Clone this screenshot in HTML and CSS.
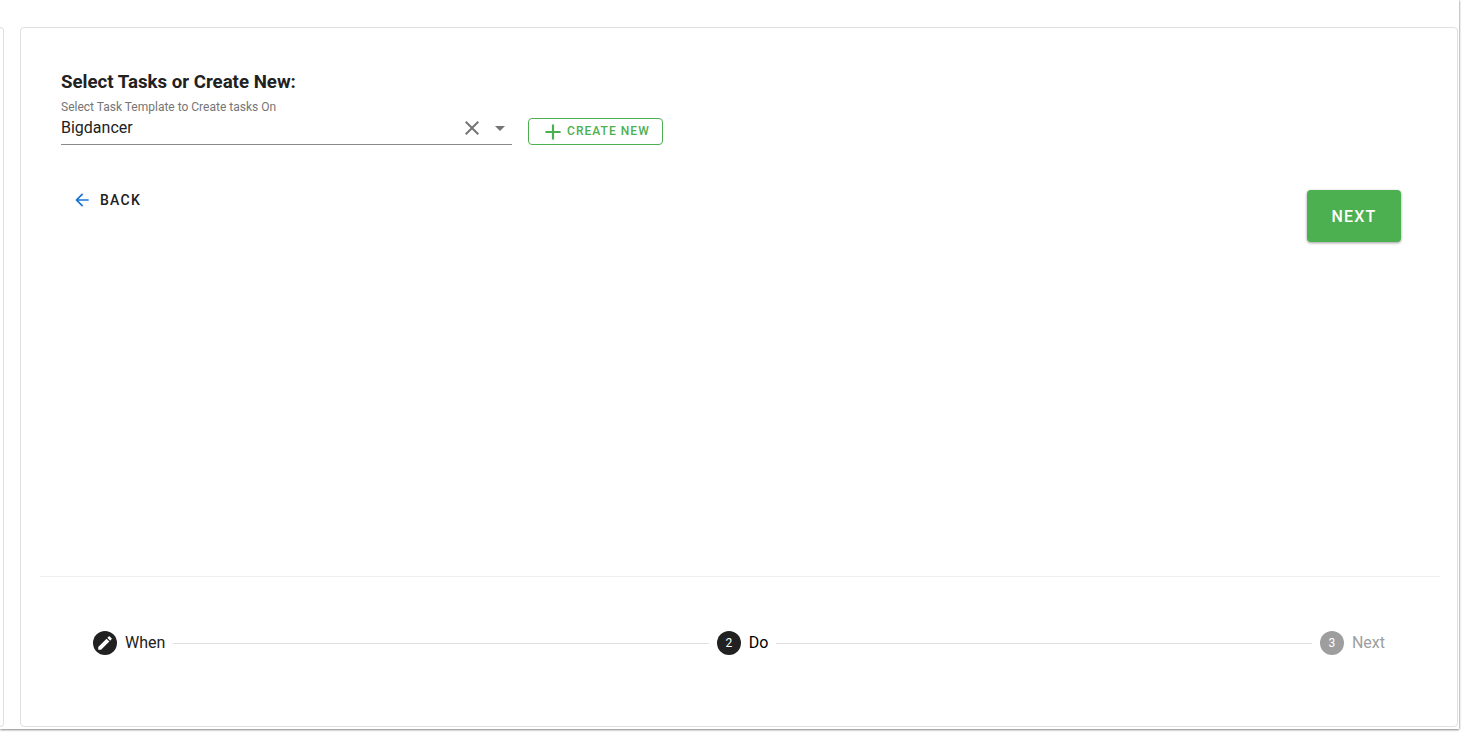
FILE: index.html
```html
<!DOCTYPE html>
<html lang="en">

<head>
    <meta charset="UTF-8">
    <title>Create Automation</title>
    <link rel="stylesheet" href="styles.css">
</head>

<body>
    <div class="page">
        <div class="side-panel"></div>

        <div class="card">
            <div class="card-body">
                <h2 class="title">Select Tasks or Create New:</h2>

                <div class="field-row">
                    <div class="field">
                        <label class="field-label">Select Task Template to Create tasks On</label>
                        <div class="field-input">
                            <span class="field-value">Bigdancer</span>
                            <svg class="icon-clear" viewBox="0 0 24 24">
                                <path d="M19 6.41 17.59 5 12 10.59 6.41 5 5 6.41 10.59 12 5 17.59 6.41 19 12 13.41 17.59 19 19 17.59 13.41 12z"></path>
                            </svg>
                            <svg class="icon-caret" viewBox="0 0 24 24">
                                <path d="M7 10l5 5 5-5z"></path>
                            </svg>
                        </div>
                    </div>

                    <button class="btn-create">
                        <svg class="icon-plus" viewBox="0 0 24 24">
                            <path d="M19 13h-6v6h-2v-6H5v-2h6V5h2v6h6v2z"></path>
                        </svg>
                        <span class="btn-create-text">Create New</span>
                    </button>
                </div>

                <div class="actions">
                    <button class="btn-back">
                        <svg class="icon-back" viewBox="0 0 24 24">
                            <path d="M20 11H7.83l5.59-5.59L12 4l-8 8 8 8 1.41-1.41L7.83 13H20v-2z"></path>
                        </svg>
                        Back
                    </button>
                    <button class="btn-next">Next</button>
                </div>
            </div>

            <hr class="divider">

            <div class="stepper">
                <div class="step">
                    <span class="step-circle">
                        <svg class="icon-edit" viewBox="0 0 24 24">
                            <path d="M3 17.25V21h3.75L17.81 9.94l-3.75-3.75L3 17.25zM20.71 7.04a1 1 0 0 0 0-1.41l-2.34-2.34a1 1 0 0 0-1.41 0l-1.83 1.83 3.75 3.75 1.83-1.83z"></path>
                        </svg>
                    </span>
                    <span class="step-label">When</span>
                </div>
                <div class="step-line"></div>
                <div class="step">
                    <span class="step-circle">2</span>
                    <span class="step-label step-active">Do</span>
                </div>
                <div class="step-line"></div>
                <div class="step step-disabled">
                    <span class="step-circle">3</span>
                    <span class="step-label">Next</span>
                </div>
            </div>
        </div>
    </div>
</body>

</html>
```

FILE: styles.css
```css
/* General Page Styles */
html,
body {
    margin: 0;
    padding: 0;
    background-color: #fff;
    overflow: hidden;
}

body {
    font-family: 'Roboto', 'Liberation Sans', sans-serif;
    color: #212121;
    height: 749px;
}

button {
    font-family: inherit;
    cursor: pointer;
}

/* Layout */
.page {
    display: flex;
    gap: 16px;
    width: 1459px;
    height: 729px;
    padding: 27px 1px 2px 0;
    box-sizing: border-box;
    box-shadow: 0 1px 2px rgba(0, 0, 0, 0.45), 1px 0 2px rgba(0, 0, 0, 0.12);
}

.side-panel {
    width: 4px;
    flex-shrink: 0;
    border: 1px solid #e0e0e0;
    border-left: none;
    border-radius: 0 4px 4px 0;
    box-sizing: border-box;
}

.card {
    flex: 1;
    display: flex;
    flex-direction: column;
    border: 1px solid #e0e0e0;
    border-radius: 4px;
    padding: 0 17px 0 19px;
    box-sizing: border-box;
}

.card-body {
    flex: 1;
    padding: 43px 39px 0 21px;
}

.title {
    margin: 0;
    font-size: 18.66px;
    line-height: 22px;
    font-weight: 700;
    color: #212121;
}

/* Select field */
.field-row {
    display: flex;
    align-items: flex-end;
    gap: 16px;
    margin-top: 7px;
}

.field {
    width: 451px;
}

.field-label {
    display: block;
    font-size: 12px;
    line-height: 14px;
    color: #757575;
}

.field-input {
    display: flex;
    align-items: center;
    height: 26px;
    padding-bottom: 4px;
    border-bottom: 1px solid #8a8a8a;
}

.field-value {
    flex: 1;
    font-size: 16px;
    line-height: 19px;
    color: #212121;
}

.icon-clear {
    width: 24px;
    height: 24px;
    margin-top: 1px;
    fill: #757575;
}

.icon-caret {
    width: 24px;
    height: 24px;
    margin-left: 4px;
    margin-top: 1px;
    fill: #757575;
}

.btn-create {
    display: flex;
    align-items: center;
    gap: 1px;
    width: 135px;
    height: 27px;
    padding: 0 0 0 11px;
    background: none;
    border: 1px solid #4caf50;
    border-radius: 4px;
    color: #4caf50;
    font-size: 12px;
    font-weight: 500;
    letter-spacing: 1.05px;
    text-transform: uppercase;
}

.btn-create-text {
    margin-bottom: 2px;
}

.icon-plus {
    width: 26px;
    height: 26px;
    fill: #4caf50;
}

/* Actions */
.actions {
    display: flex;
    justify-content: space-between;
    align-items: flex-start;
    margin-top: 45px;
}

.btn-back {
    display: flex;
    align-items: center;
    gap: 8px;
    height: 20px;
    margin: 0 0 0 11px;
    padding: 0;
    background: none;
    border: none;
    color: #212121;
    font-size: 14px;
    font-weight: 500;
    letter-spacing: 1.25px;
    text-transform: uppercase;
}

.icon-back {
    width: 20px;
    height: 20px;
    fill: #1976d2;
}

.btn-next {
    width: 94px;
    height: 52px;
    background-color: #4caf50;
    border: none;
    border-radius: 4px;
    color: #fff;
    font-size: 16px;
    font-weight: 500;
    letter-spacing: 1.25px;
    text-transform: uppercase;
    box-shadow: 0 1px 3px rgba(0, 0, 0, 0.4);
}

/* Stepper */
.divider {
    width: 100%;
    margin: 0;
    border: none;
    border-top: 1px solid #eeeeee;
}

.stepper {
    display: flex;
    align-items: center;
    height: 132px;
    padding: 0 55px 0 53px;
    margin-bottom: 17px;
    box-sizing: border-box;
}

.step {
    display: flex;
    align-items: center;
    gap: 8px;
}

.step-circle {
    display: flex;
    align-items: center;
    justify-content: center;
    width: 24px;
    height: 24px;
    border-radius: 50%;
    background-color: #212121;
    color: #fff;
    font-size: 12px;
}

.icon-edit {
    width: 18px;
    height: 18px;
    fill: #fff;
}

.step-label {
    padding-bottom: 2px;
    font-size: 16px;
    color: #212121;
}

.step-active {
    color: #000;
}

.step-disabled .step-circle {
    background-color: #9e9e9e;
}

.step-disabled .step-label {
    color: #9e9e9e;
}

.step-line {
    flex: 1;
    margin: 0 8px;
    border-top: 1px solid #e0e0e0;
}
```
